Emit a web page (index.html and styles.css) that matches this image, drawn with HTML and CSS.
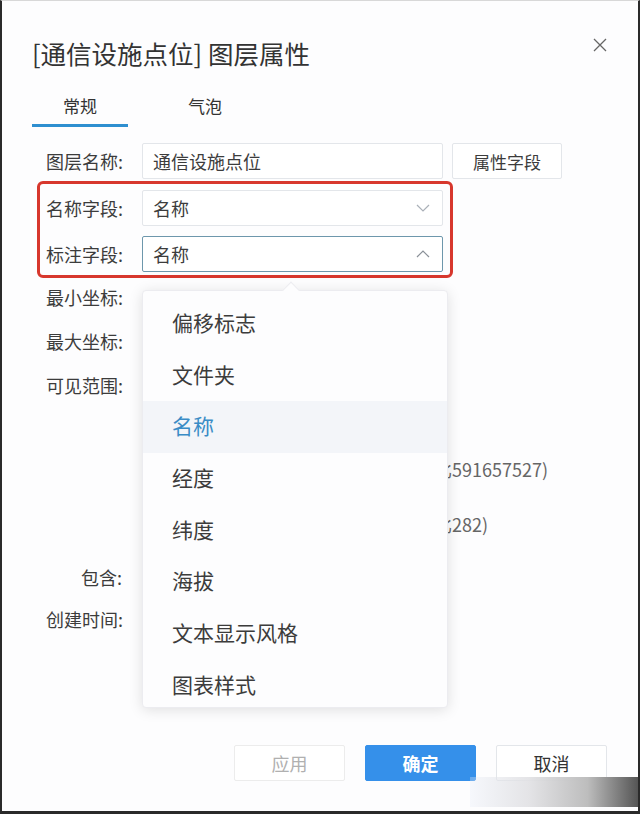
FILE: index.html
```html
<!DOCTYPE html>
<html lang="zh-CN">
<head>
    <meta charset="UTF-8">
    <meta name="viewport" content="width=device-width, initial-scale=1.0">
    <title>图层属性</title>
    <link rel="stylesheet" href="styles.css">
</head>
<body>
    <div class="dialog">
        <div class="dialog-header">
            <h1 class="dialog-title">[通信设施点位] 图层属性</h1>
            <span class="close-btn">
                <svg width="16" height="16" viewBox="0 0 16 16"><path d="M2 2 L14 14 M14 2 L2 14" stroke="#666" stroke-width="1.3" fill="none"/></svg>
            </span>
        </div>

        <div class="tabs">
            <div class="tab active">常规</div>
            <div class="tab">气泡</div>
        </div>

        <div class="form">
            <div class="row">
                <label class="label">图层名称:</label>
                <div class="input">通信设施点位</div>
                <div class="btn-field">属性字段</div>
            </div>

            <div class="highlight-group">
                <div class="row">
                    <label class="label">名称字段:</label>
                    <div class="select">
                        <span>名称</span>
                        <svg width="14" height="8" viewBox="0 0 14 8"><path d="M1 1 L7 7 L13 1" stroke="#aab0b8" stroke-width="1.2" fill="none"/></svg>
                    </div>
                </div>
                <div class="row">
                    <label class="label">标注字段:</label>
                    <div class="select focused">
                        <span>名称</span>
                        <svg width="14" height="8" viewBox="0 0 14 8"><path d="M1 7 L7 1 L13 7" stroke="#8a9098" stroke-width="1.2" fill="none"/></svg>
                    </div>
                </div>
            </div>

            <div class="row plain r-min">
                <label class="label">最小坐标:</label>
            </div>
            <div class="row plain">
                <label class="label">最大坐标:</label>
            </div>
            <div class="row plain">
                <label class="label">可见范围:</label>
            </div>
            <div class="row plain r-scale1">
                <span class="label"></span>
                <span class="scale-note">1比591657527)</span>
            </div>
            <div class="row plain r-scale2">
                <span class="label"></span>
                <span class="scale-note">1比282)</span>
            </div>
            <div class="row plain r-include">
                <label class="label">包含:</label>
            </div>
            <div class="row plain r-created">
                <label class="label">创建时间:</label>
            </div>
        </div>

        <div class="footer">
            <div class="btn disabled">应用</div>
            <div class="btn primary">确定</div>
            <div class="btn">取消</div>
        </div>

        <!-- dropdown of 标注字段 -->
        <div class="dropdown">
            <span class="dropdown-arrow"></span>
            <div class="option">偏移标志</div>
            <div class="option">文件夹</div>
            <div class="option selected">名称</div>
            <div class="option">经度</div>
            <div class="option">纬度</div>
            <div class="option">海拔</div>
            <div class="option">文本显示风格</div>
            <div class="option">图表样式</div>
        </div>

        <div class="watermark"></div>
    </div>
</body>
</html>
```

FILE: styles.css
```css
* {
    box-sizing: border-box;
}

body {
    margin: 0;
    padding: 0;
    background-color: #fff;
    font-family: "Noto Sans CJK SC", "Noto Sans", sans-serif;
    color: #3c3c3c;
}

.dialog {
    position: relative;
    width: 640px;
    height: 814px;
    background-color: #fdfdfe;
    border-left: 2px solid #2a2a2a;
    border-right: 2px solid #2a2a2a;
    border-bottom: 3px solid #2a2a2a;
    border-top: 1px solid #d8d8d8;
    padding: 0 0 0 30px;
    overflow: hidden;
}

.dialog-header {
    display: flex;
    align-items: center;
    justify-content: space-between;
    height: 68px;
    padding-top: 34px;
    padding-right: 30px;
}

.dialog-title {
    margin: 0;
    font-size: 25.5px;
    font-weight: 400;
    color: #333;
}

.close-btn {
    display: flex;
    margin-top: -14px;
}

.tabs {
    display: flex;
    height: 58px;
}

.tab {
    width: 96px;
    height: 58px;
    padding-top: 18px;
    display: flex;
    align-items: center;
    justify-content: center;
    font-size: 17px;
    color: #333;
    border-bottom: 3px solid transparent;
}

.tab + .tab {
    margin-left: 29px;
}

.tab.active {
    border-bottom-color: #2e8fd0;
}

.form {
    display: flex;
    flex-direction: column;
    padding-top: 16px;
    padding-left: 14px;
}

.row {
    display: flex;
    align-items: center;
    gap: 20px;
    height: 36px;
}

.label {
    width: 76px;
    flex-shrink: 0;
    text-align: right;
    font-size: 18px;
    white-space: nowrap;
    color: #3c3c3c;
}

.input,
.select {
    width: 301px;
    height: 36px;
    border: 1px solid #e3e6ea;
    border-radius: 2px;
    padding: 0 10px;
    display: flex;
    align-items: center;
    font-size: 18px;
    background: #fff;
}

.select {
    justify-content: space-between;
    padding-right: 12px;
}

.select.focused {
    border-color: #6d97ac;
}

.btn-field {
    width: 110px;
    height: 36px;
    margin-left: -11px;
    border: 1px solid #e3e6ea;
    border-radius: 2px;
    display: flex;
    align-items: center;
    justify-content: center;
    font-size: 17px;
    background: #fff;
}

.highlight-group {
    width: fit-content;
    margin: 2px 0 0 -9px;
    padding: 6px 7px 3px 6px;
    border: 3px solid #d7372d;
    border-radius: 6px;
    display: flex;
    flex-direction: column;
    gap: 10px;
}

.row.plain {
    margin-top: 8px;
}

.row.r-min {
    margin-top: 1px;
}

.row.r-scale1 {
    margin-top: 48px;
}

.row.r-scale2 {
    margin-top: 19px;
}

.row.r-include {
    margin-top: 17px;
}

.row.r-created {
    margin-top: 6px;
}

.scale-note {
    padding-left: 282px;
    font-size: 18px;
    color: #666;
    white-space: nowrap;
}

.footer {
    position: absolute;
    left: 0;
    right: 0;
    top: 744px;
    display: flex;
    justify-content: flex-end;
    gap: 20px;
    padding-right: 31px;
}

.btn {
    width: 111px;
    height: 36px;
    border: 1px solid #e3e6ea;
    border-radius: 2px;
    background: #fff;
    display: flex;
    align-items: center;
    justify-content: center;
    font-size: 18px;
    color: #333;
}

.btn.disabled {
    color: #b0b0b0;
    border-color: #ececec;
}

.btn.primary {
    background-color: #3590ea;
    border-color: #3590ea;
    color: #fff;
    font-weight: 700;
}

.dropdown {
    position: absolute;
    left: 140px;
    top: 289px;
    width: 306px;
    height: 418px;
    padding-top: 7px;
    background: #fdfdfe;
    border: 1px solid #ececf0;
    border-radius: 4px;
    box-shadow: 0 2px 14px rgba(0, 0, 0, 0.12);
}

.dropdown-arrow {
    position: absolute;
    top: -7px;
    left: 142px;
    width: 12px;
    height: 12px;
    background: #fdfdfe;
    border-left: 1px solid #ececf0;
    border-top: 1px solid #ececf0;
    transform: rotate(45deg);
}

.option {
    height: 51.7px;
    line-height: 48px;
    padding-left: 29px;
    font-size: 21px;
    color: #3c3c3c;
}

.option.selected {
    background-color: #f3f5f9;
    color: #3a8cc6;
}

.watermark {
    position: absolute;
    left: 468px;
    right: 0;
    top: 776px;
    height: 30px;
    background: linear-gradient(to right, rgba(230, 236, 248, 0.3), rgba(225, 225, 228, 0.9) 35%, #bdbdbd 70%, #555 100%);
}
```
